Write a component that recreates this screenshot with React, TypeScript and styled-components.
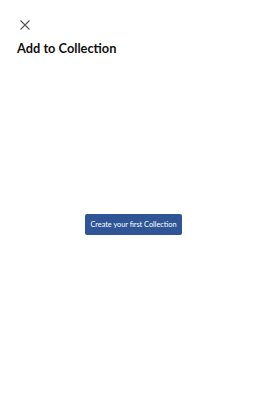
import React from "react"
import styled, { createGlobalStyle } from "styled-components"

const GlobalStyle = createGlobalStyle`
  html, body {
    margin: 0;
    padding: 0;
    background: #fff;
    font-family: Lato, "Liberation Sans", Arial, sans-serif;
  }
`

const App: React.FC = () => {
  return (
    <>
      <GlobalStyle />
      <StyledSheet>
        <div className="header">
          <CloseButton aria-label="Close">
            <svg width="10" height="10" viewBox="0 0 10 10">
              <path d="M0.5 0.5 L9.5 9.5 M9.5 0.5 L0.5 9.5" stroke="#555" strokeWidth="1.1" fill="none" />
            </svg>
          </CloseButton>
          <Title>Add to Collection</Title>
        </div>
        <div className="body">
          <PrimaryButton>Create your first Collection</PrimaryButton>
        </div>
      </StyledSheet>
    </>
  )
}

const StyledSheet = styled.div`
  width: 266px;
  height: 401px;
  display: flex;
  flex-direction: column;
  & .header {
    padding: 20px 17px 0;
    display: flex;
    flex-direction: column;
    align-items: flex-start;
  }
  & .body {
    flex: 1;
    display: flex;
    justify-content: center;
    padding-top: 158px;
  }
`

const CloseButton = styled.button`
  width: 10px;
  height: 10px;
  margin-left: 3px;
  padding: 0;
  border: none;
  background: none;
  display: flex;
`

const Title = styled.h1`
  margin: 10px 0 0;
  font-family: Lato, "Liberation Sans", Arial, sans-serif;
  font-size: 12.8px;
  font-weight: bold;
  color: #111;
  line-height: 16px;
`

const PrimaryButton = styled.button`
  width: 97px;
  height: 21px;
  margin-left: 1px;
  padding: 0;
  border: none;
  border-radius: 2px;
  background: #2f5597;
  color: #fff;
  font-family: Lato, "Liberation Sans", Arial, sans-serif;
  font-size: 7.3px;
  align-self: flex-start;
`

export default App
